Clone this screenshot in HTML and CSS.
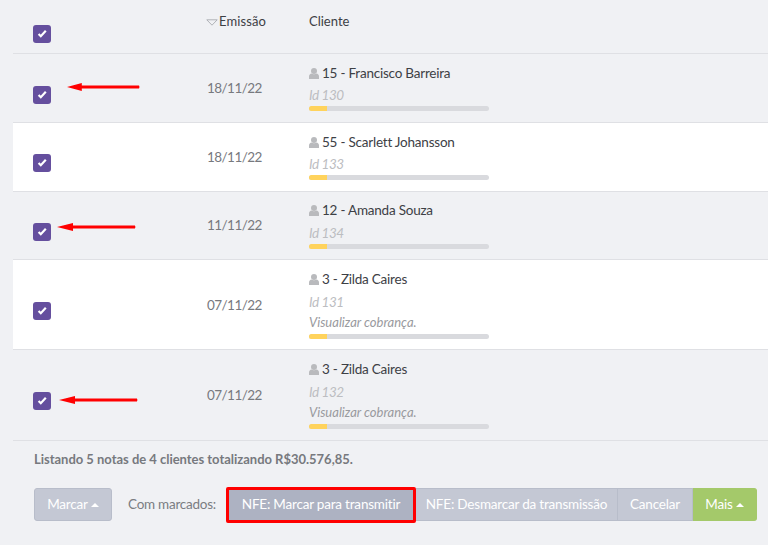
FILE: index.html
```html
<!DOCTYPE html>
<html lang="pt-BR">
<head>
<meta charset="utf-8">
<title>Notas</title>
<link rel="stylesheet" href="styles.css">
</head>
<body>
<div class="list">
  <div class="row head">
    <div class="col-check"><span class="check"><svg viewBox="0 0 12 12"><path d="M2.6 6 4.8 8.2 9.8 2.8" /></svg></span></div>
    <div class="col-date"><svg class="sort" viewBox="0 0 12 7"><path d="M.8.8h10.4L6 6.2z"/></svg>Emissão</div>
    <div class="col-client">Cliente</div>
  </div>

  <div class="row first">
    <div class="col-check"><span class="check"><svg viewBox="0 0 12 12"><path d="M2.6 6 4.8 8.2 9.8 2.8" /></svg></span>
      <svg class="arrow arrow-1" viewBox="0 0 74 10" preserveAspectRatio="none"><path d="M0 5 15 1V3.5H73Q74 5 73 6.5H15V9z"/></svg></div>
    <div class="col-date">18/11/22</div>
    <div class="col-client">
      <div class="name"><svg class="user" viewBox="0 0 10 11"><circle cx="5" cy="3" r="3"/><path d="M0 11V8.4C0 6.8 1.2 5.9 2.6 5.6 3.8 6.6 6.2 6.6 7.4 5.6 8.8 5.9 10 6.8 10 8.4V11z"/></svg>15 - Francisco Barreira</div>
      <div class="id">Id 130</div>
      <div class="bar"><div class="fill"></div></div>
    </div>
  </div>

  <div class="row odd">
    <div class="col-check"><span class="check"><svg viewBox="0 0 12 12"><path d="M2.6 6 4.8 8.2 9.8 2.8" /></svg></span></div>
    <div class="col-date">18/11/22</div>
    <div class="col-client">
      <div class="name"><svg class="user" viewBox="0 0 10 11"><circle cx="5" cy="3" r="3"/><path d="M0 11V8.4C0 6.8 1.2 5.9 2.6 5.6 3.8 6.6 6.2 6.6 7.4 5.6 8.8 5.9 10 6.8 10 8.4V11z"/></svg>55 - Scarlett Johansson</div>
      <div class="id">Id 133</div>
      <div class="bar"><div class="fill"></div></div>
    </div>
  </div>

  <div class="row short">
    <div class="col-check"><span class="check"><svg viewBox="0 0 12 12"><path d="M2.6 6 4.8 8.2 9.8 2.8" /></svg></span>
      <svg class="arrow arrow-2" viewBox="0 0 74 10" preserveAspectRatio="none"><path d="M0 5 15 1V3.5H73Q74 5 73 6.5H15V9z"/></svg></div>
    <div class="col-date">11/11/22</div>
    <div class="col-client">
      <div class="name"><svg class="user" viewBox="0 0 10 11"><circle cx="5" cy="3" r="3"/><path d="M0 11V8.4C0 6.8 1.2 5.9 2.6 5.6 3.8 6.6 6.2 6.6 7.4 5.6 8.8 5.9 10 6.8 10 8.4V11z"/></svg>12 - Amanda Souza</div>
      <div class="id">Id 134</div>
      <div class="bar"><div class="fill"></div></div>
    </div>
  </div>

  <div class="row odd tall">
    <div class="col-check"><span class="check"><svg viewBox="0 0 12 12"><path d="M2.6 6 4.8 8.2 9.8 2.8" /></svg></span></div>
    <div class="col-date">07/11/22</div>
    <div class="col-client">
      <div class="name"><svg class="user" viewBox="0 0 10 11"><circle cx="5" cy="3" r="3"/><path d="M0 11V8.4C0 6.8 1.2 5.9 2.6 5.6 3.8 6.6 6.2 6.6 7.4 5.6 8.8 5.9 10 6.8 10 8.4V11z"/></svg>3 - Zilda Caires</div>
      <div class="id">Id 131</div>
      <div class="link">Visualizar cobrança.</div>
      <div class="bar"><div class="fill"></div></div>
    </div>
  </div>

  <div class="row tall last">
    <div class="col-check"><span class="check"><svg viewBox="0 0 12 12"><path d="M2.6 6 4.8 8.2 9.8 2.8" /></svg></span>
      <svg class="arrow arrow-3" viewBox="0 0 74 10" preserveAspectRatio="none"><path d="M0 5 15 1V3.5H73Q74 5 73 6.5H15V9z"/></svg></div>
    <div class="col-date">07/11/22</div>
    <div class="col-client">
      <div class="name"><svg class="user" viewBox="0 0 10 11"><circle cx="5" cy="3" r="3"/><path d="M0 11V8.4C0 6.8 1.2 5.9 2.6 5.6 3.8 6.6 6.2 6.6 7.4 5.6 8.8 5.9 10 6.8 10 8.4V11z"/></svg>3 - Zilda Caires</div>
      <div class="id">Id 132</div>
      <div class="link">Visualizar cobrança.</div>
      <div class="bar"><div class="fill"></div></div>
    </div>
  </div>
</div>

<p class="summary">Listando 5 notas de 4 clientes totalizando R$30.576,85.</p>

<div class="actions">
  <button class="btn solo">Marcar<span class="caret"></span></button>
  <span class="label">Com marcados:</span>
  <div class="group">
    <button class="btn active">NFE: Marcar para transmitir</button>
    <button class="btn">NFE: Desmarcar da transmissão</button>
    <button class="btn">Cancelar</button>
    <button class="btn green">Mais<span class="caret"></span></button>
  </div>
</div>
</body>
</html>
```

FILE: styles.css
```css
* { box-sizing: border-box; }
html, body { margin: 0; height: 545px; overflow: hidden; }
body {
  background: #f0f1f4;
  font-family: Lato, sans-serif;
  font-size: 14px;
  color: #3d4045;
}
.list { margin-left: 13px; }
.row {
  display: flex;
  height: 69px;
  border-bottom: 1px solid #dfe0e4;
}
.row.head { height: 54px; }
.row.short { height: 68px; }
.row.odd { background: #fff; }
.row.tall { height: 90px; }
.row.last { height: 91px; }
.col-check {
  position: relative;
  width: 194px;
  padding: 31px 0 0 20px;
}
.head .col-check { padding-top: 25px; }
.first .col-check { padding-top: 32px; }
.tall .col-check { padding-top: 42px; }
.col-date {
  width: 102px;
  padding-top: 26px;
  color: #77797e;
  font-size: 13.5px;
  letter-spacing: -.55px;
  line-height: 17px;
}
.short .col-date { padding-top: 25px; }
.head .col-date { padding-top: 13px; color: #3d4045; font-size: 13px; letter-spacing: .1px; line-height: 17px; }
.tall .col-date { padding-top: 37px; }
.col-client { width: 180px; padding-top: 10px; }
.short .col-client { padding-top: 9px; }
.head .col-client { padding-top: 13px; font-size: 13px; line-height: 17px; }
.check {
  display: block;
  width: 18px;
  height: 18px;
  border-radius: 3px;
  background: #654f9e;
  padding: 3px;
}
.check svg { display: block; width: 12px; height: 12px; fill: none; stroke: #fff; stroke-width: 2.2; }
.sort { width: 12px; height: 7px; margin: 0 1px 0 -1px; fill: #f0f1f4; stroke: #a9abb0; stroke-width: .9; }
.arrow { position: absolute; height: 10px; fill: #f00; }
.arrow-1 { left: 54px; top: 27.5px; width: 73px; }
.arrow-2 { left: 44px; top: 30px; width: 79px; }
.arrow-3 { left: 46px; top: 45px; width: 79px; }
.name { display: flex; align-items: center; height: 18px; font-size: 13.5px; letter-spacing: -.22px; line-height: 18px; color: #3d4045; }
.user { width: 10px; height: 11px; margin-right: 3px; fill: #b9babd; }
.id { margin-top: 4px; height: 18px; line-height: 18px; font-size: 13.5px; letter-spacing: -.4px; font-style: italic; color: #bcbdc1; }
.short .id { margin-top: 5px; }
.tall .id { margin-top: 5px; }
.link { margin-top: 2px; height: 18px; line-height: 18px; font-size: 13px; font-style: italic; color: #999a9e; }
.bar { margin-top: 2px; height: 5px; border-radius: 3px; background: #d9dade; overflow: hidden; }
.tall .bar { margin-top: 3px; }
.fill { width: 10%; height: 100%; background: #ffd35c; }
.summary {
  margin: 10px 0 0 34px;
  font-size: 13px;
  letter-spacing: -.02px;
  line-height: 17px;
  font-weight: 700;
  color: #77797e;
}
.actions {
  display: flex;
  align-items: flex-start;
  margin: 20px 0 0 34px;
}
.btn {
  height: 33px;
  padding: 0;
  font: 400 13.5px/1 Lato, sans-serif;
  letter-spacing: -.2px;
  color: #fff;
  background: #c4c8d4;
  border: 1px solid #b8bdca;
  white-space: nowrap;
}
.solo { width: 78px; border-radius: 3px; }
.label { width: 98px; margin-left: 16px; line-height: 33px; color: #7b7d82; font-size: 13.5px; letter-spacing: -.25px; }
.group { display: flex; align-items: flex-start; }
.group .btn { border-left-width: 0; }
.btn.active {
  width: 190px;
  height: 36px;
  margin: -1px 0 -2px;
  background: #adb2c2;
  border: 3px solid #f00;
  border-radius: 2px;
}
.group .btn:nth-child(2) { width: 202px; }
.group .btn:nth-child(3) { width: 75px; }
.btn.green {
  width: 64px;
  background: #a4c96a;
  border-color: #a4c96a;
  border-radius: 0 3px 3px 0;
}
.caret {
  display: inline-block;
  margin-left: 3px;
  vertical-align: 2px;
  border-left: 4px solid transparent;
  border-right: 4px solid transparent;
  border-bottom: 4px solid #fff;
}
```
